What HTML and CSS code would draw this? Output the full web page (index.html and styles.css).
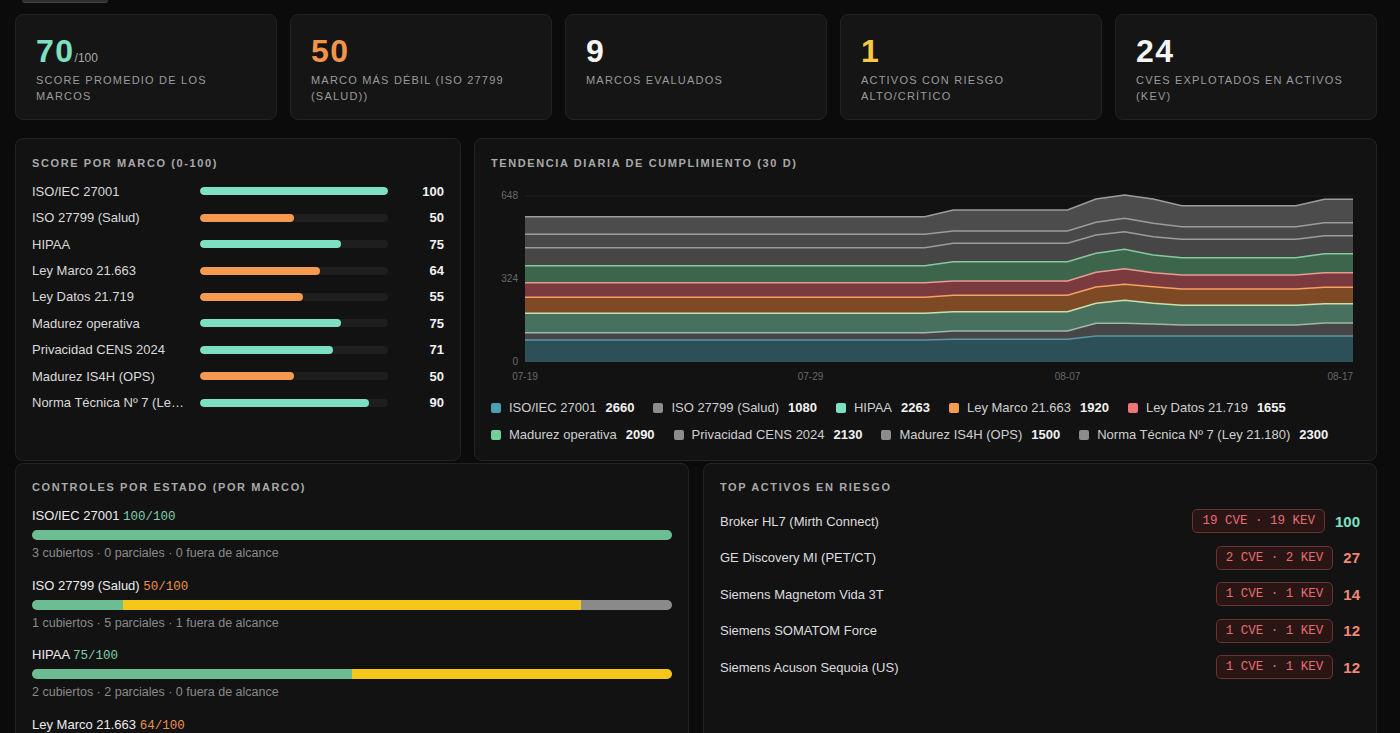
FILE: index.html
```html
<!DOCTYPE html>
<html lang="es">
<head>
    <meta charset="UTF-8">
    <meta name="viewport" content="width=device-width, initial-scale=1.0">
    <title>Cumplimiento</title>
    <link rel="stylesheet" href="styles.css">
</head>
<body>
<div class="page">
    <div class="toolbar"><span class="toolbar-btn"></span></div>

    <div class="stats">
        <div class="stat">
            <div class="stat-num mint">70<small>/100</small></div>
            <div class="stat-label">Score promedio de los marcos</div>
        </div>
        <div class="stat">
            <div class="stat-num orange">50</div>
            <div class="stat-label">Marco más débil (ISO 27799 (Salud))</div>
        </div>
        <div class="stat">
            <div class="stat-num">9</div>
            <div class="stat-label">Marcos evaluados</div>
        </div>
        <div class="stat">
            <div class="stat-num yellow">1</div>
            <div class="stat-label">Activos con riesgo alto/crítico</div>
        </div>
        <div class="stat">
            <div class="stat-num">24</div>
            <div class="stat-label">CVEs explotados en activos (KEV)</div>
        </div>
    </div>

    <div class="row-two">
        <section class="panel">
            <h2 class="panel-title">Score por marco (0-100)</h2>
            <div class="score-list">
                <div class="score-row"><span class="score-name">ISO/IEC 27001</span><span class="track"><span class="fill good" style="width:100%"></span></span><span class="score-val">100</span></div>
                <div class="score-row"><span class="score-name">ISO 27799 (Salud)</span><span class="track"><span class="fill warn" style="width:50%"></span></span><span class="score-val">50</span></div>
                <div class="score-row"><span class="score-name">HIPAA</span><span class="track"><span class="fill good" style="width:75%"></span></span><span class="score-val">75</span></div>
                <div class="score-row"><span class="score-name">Ley Marco 21.663</span><span class="track"><span class="fill warn" style="width:64%"></span></span><span class="score-val">64</span></div>
                <div class="score-row"><span class="score-name">Ley Datos 21.719</span><span class="track"><span class="fill warn" style="width:55%"></span></span><span class="score-val">55</span></div>
                <div class="score-row"><span class="score-name">Madurez operativa</span><span class="track"><span class="fill good" style="width:75%"></span></span><span class="score-val">75</span></div>
                <div class="score-row"><span class="score-name">Privacidad CENS 2024</span><span class="track"><span class="fill good" style="width:71%"></span></span><span class="score-val">71</span></div>
                <div class="score-row"><span class="score-name">Madurez IS4H (OPS)</span><span class="track"><span class="fill warn" style="width:50%"></span></span><span class="score-val">50</span></div>
                <div class="score-row"><span class="score-name">Norma Técnica Nº 7 (Ley 21.180)</span><span class="track"><span class="fill good" style="width:90%"></span></span><span class="score-val">90</span></div>
            </div>
        </section>

        <section class="panel">
            <h2 class="panel-title">Tendencia diaria de cumplimiento (30 d)</h2>
            <svg class="chart" width="869" height="198" viewBox="0 0 869 198">
                <line class="grid" x1="34" y1="10" x2="862" y2="10"/>
                <line class="grid" x1="34" y1="93" x2="862" y2="93"/>

                <!-- capas apiladas, de arriba hacia abajo -->
                <polygon fill="#4c4c4c" points="34,30.7 433.7,30.7 462.3,24 576.5,24 605,13 633.6,9 662.1,13 690.7,19.7 804.9,19.7 833.5,13.3 862,13.3 862,176 34,176"/>
                <polygon fill="#484848" points="34,48.3 433.7,48.3 462.3,45 576.5,45 605,36.3 633.6,32.3 662.1,37.3 690.7,40.7 804.9,40.7 833.5,36.7 862,36.7 862,176 34,176"/>
                <polygon fill="#464646" points="34,61.7 433.7,61.7 462.3,57.3 576.5,57.3 605,49 633.6,45.7 662.1,50.7 690.7,53.3 804.9,53.3 833.5,49.7 862,49.7 862,176 34,176"/>
                <polygon fill="#3d654b" points="34,79.7 433.7,79.7 462.3,75.7 576.5,75.7 605,67.3 633.6,63.3 662.1,69 690.7,71.7 804.9,71.7 833.5,67.7 862,67.7 862,176 34,176"/>
                <polygon fill="#7b3b3e" points="34,96.7 433.7,96.7 462.3,95 576.5,95 605,86.3 633.6,82.7 662.1,86.7 690.7,89 804.9,89 833.5,86.7 862,86.7 862,176 34,176"/>
                <polygon fill="#7d4a25" points="34,111.3 433.7,111.3 462.3,109.3 576.5,109.3 605,101 633.6,98.3 662.1,100.7 690.7,103 804.9,103 833.5,101.3 862,101.3 862,176 34,176"/>
                <polygon fill="#47705f" points="34,127.3 433.7,127.3 462.3,125.7 576.5,125.7 605,117.3 633.6,114.3 662.1,117.3 690.7,119.3 804.9,119.3 833.5,117.7 862,117.7 862,176 34,176"/>
                <polygon fill="#464646" points="34,146.7 433.7,146.7 462.3,145 576.5,145 605,137.3 633.6,137.3 662.1,138 690.7,139 804.9,139 833.5,137 862,137 862,176 34,176"/>
                <polygon fill="#2d5058" points="34,154 433.7,154 462.3,153.3 576.5,153.3 605,150 633.6,150 662.1,150 690.7,150 804.9,150 833.5,150 862,150 862,176 34,176"/>

                <polyline class="edge" stroke="#9c9c9c" points="34,30.7 433.7,30.7 462.3,24 576.5,24 605,13 633.6,9 662.1,13 690.7,19.7 804.9,19.7 833.5,13.3 862,13.3"/>
                <polyline class="edge" stroke="#9c9c9c" points="34,48.3 433.7,48.3 462.3,45 576.5,45 605,36.3 633.6,32.3 662.1,37.3 690.7,40.7 804.9,40.7 833.5,36.7 862,36.7"/>
                <polyline class="edge" stroke="#9c9c9c" points="34,61.7 433.7,61.7 462.3,57.3 576.5,57.3 605,49 633.6,45.7 662.1,50.7 690.7,53.3 804.9,53.3 833.5,49.7 862,49.7"/>
                <polyline class="edge" stroke="#86c9a0" points="34,79.7 433.7,79.7 462.3,75.7 576.5,75.7 605,67.3 633.6,63.3 662.1,69 690.7,71.7 804.9,71.7 833.5,67.7 862,67.7"/>
                <polyline class="edge" stroke="#e89a94" points="34,96.7 433.7,96.7 462.3,95 576.5,95 605,86.3 633.6,82.7 662.1,86.7 690.7,89 804.9,89 833.5,86.7 862,86.7"/>
                <polyline class="edge" stroke="#f7a060" points="34,111.3 433.7,111.3 462.3,109.3 576.5,109.3 605,101 633.6,98.3 662.1,100.7 690.7,103 804.9,103 833.5,101.3 862,101.3"/>
                <polyline class="edge" stroke="#c6e2b0" points="34,127.3 433.7,127.3 462.3,125.7 576.5,125.7 605,117.3 633.6,114.3 662.1,117.3 690.7,119.3 804.9,119.3 833.5,117.7 862,117.7"/>
                <polyline class="edge" stroke="#a3b5ae" points="34,146.7 433.7,146.7 462.3,145 576.5,145 605,137.3 633.6,137.3 662.1,138 690.7,139 804.9,139 833.5,137 862,137"/>
                <polyline class="edge" stroke="#5b97a6" points="34,154 433.7,154 462.3,153.3 576.5,153.3 605,150 633.6,150 662.1,150 690.7,150 804.9,150 833.5,150 862,150"/>

                <text class="axis" x="27" y="13" text-anchor="end">648</text>
                <text class="axis" x="27" y="96" text-anchor="end">324</text>
                <text class="axis" x="27" y="179" text-anchor="end">0</text>
                <text class="axis" x="34" y="194" text-anchor="middle">07-19</text>
                <text class="axis" x="319.5" y="194" text-anchor="middle">07-29</text>
                <text class="axis" x="576.5" y="194" text-anchor="middle">08-07</text>
                <text class="axis" x="862" y="194" text-anchor="end">08-17</text>
            </svg>
            <div class="legend">
                <span class="legend-item"><i class="sw" style="background:#4f9db3"></i>ISO/IEC 27001<b>2660</b></span>
                <span class="legend-item"><i class="sw" style="background:#8c8c8c"></i>ISO 27799 (Salud)<b>1080</b></span>
                <span class="legend-item"><i class="sw" style="background:#7ee0c3"></i>HIPAA<b>2263</b></span>
                <span class="legend-item"><i class="sw" style="background:#f59a4e"></i>Ley Marco 21.663<b>1920</b></span>
                <span class="legend-item"><i class="sw" style="background:#f07479"></i>Ley Datos 21.719<b>1655</b></span>
                <span class="legend-item"><i class="sw" style="background:#72cf98"></i>Madurez operativa<b>2090</b></span>
                <span class="legend-item"><i class="sw" style="background:#8c8c8c"></i>Privacidad CENS 2024<b>2130</b></span>
                <span class="legend-item"><i class="sw" style="background:#8c8c8c"></i>Madurez IS4H (OPS)<b>1500</b></span>
                <span class="legend-item"><i class="sw" style="background:#8c8c8c"></i>Norma Técnica Nº 7 (Ley 21.180)<b>2300</b></span>
            </div>
        </section>
    </div>

    <div class="row-three">
        <section class="panel">
            <h2 class="panel-title">Controles por estado (por marco)</h2>
            <div class="ctrl-list">
                <div class="ctrl">
                    <div class="ctrl-head">ISO/IEC 27001 <span class="mono ok">100/100</span></div>
                    <div class="stack"><span class="seg cov" style="width:100%"></span></div>
                    <div class="ctrl-sub">3 cubiertos · 0 parciales · 0 fuera de alcance</div>
                </div>
                <div class="ctrl">
                    <div class="ctrl-head">ISO 27799 (Salud) <span class="mono low">50/100</span></div>
                    <div class="stack"><span class="seg cov" style="width:14.29%"></span><span class="seg par" style="width:71.42%"></span><span class="seg out" style="width:14.29%"></span></div>
                    <div class="ctrl-sub">1 cubiertos · 5 parciales · 1 fuera de alcance</div>
                </div>
                <div class="ctrl">
                    <div class="ctrl-head">HIPAA <span class="mono ok">75/100</span></div>
                    <div class="stack"><span class="seg cov" style="width:50%"></span><span class="seg par" style="width:50%"></span></div>
                    <div class="ctrl-sub">2 cubiertos · 2 parciales · 0 fuera de alcance</div>
                </div>
                <div class="ctrl">
                    <div class="ctrl-head">Ley Marco 21.663 <span class="mono low">64/100</span></div>
                    <div class="stack"><span class="seg cov" style="width:40%"></span><span class="seg par" style="width:60%"></span></div>
                    <div class="ctrl-sub">2 cubiertos · 3 parciales · 0 fuera de alcance</div>
                </div>
            </div>
        </section>

        <section class="panel">
            <h2 class="panel-title">Top activos en riesgo</h2>
            <div class="risk-list">
                <div class="risk-row"><span class="risk-name">Broker HL7 (Mirth Connect)</span><span class="badge">19 CVE · 19 KEV</span><span class="risk-val ok">100</span></div>
                <div class="risk-row"><span class="risk-name">GE Discovery MI (PET/CT)</span><span class="badge">2 CVE · 2 KEV</span><span class="risk-val">27</span></div>
                <div class="risk-row"><span class="risk-name">Siemens Magnetom Vida 3T</span><span class="badge">1 CVE · 1 KEV</span><span class="risk-val">14</span></div>
                <div class="risk-row"><span class="risk-name">Siemens SOMATOM Force</span><span class="badge">1 CVE · 1 KEV</span><span class="risk-val">12</span></div>
                <div class="risk-row"><span class="risk-name">Siemens Acuson Sequoia (US)</span><span class="badge">1 CVE · 1 KEV</span><span class="risk-val">12</span></div>
            </div>
        </section>
    </div>
</div>
</body>
</html>
```

FILE: styles.css
```css
html {overflow: hidden;}
body {margin: 0; background: #0b0b0b; color: #dcdcdc; font-family: "Liberation Sans", Arial, sans-serif; font-size: 13px;}
.page {padding: 0 23px 0 15px;}

.toolbar {height: 2px; margin-bottom: 12px;}
.toolbar-btn {display: block; width: 86px; height: 2px; margin-left: 7px; background: #2f2f2f; border-bottom: 1px solid #444; border-radius: 0 0 4px 4px;}

/* tarjetas de resumen */
.stats {display: grid; grid-template-columns: repeat(5, 1fr); gap: 13px;}
.stat {background: #151515; border: 1px solid #222; border-radius: 8px; padding: 20px 20px 15px;}
.stat-num {font-size: 32px; font-weight: 700; line-height: 32px; color: #f4f4f4; letter-spacing: 1.5px;}
.stat-num small {font-size: 12px; font-weight: 400; line-height: 0; color: #a8a8a8; letter-spacing: 0;}
.stat-label {margin-top: 5px; font-size: 11px; line-height: 16px; letter-spacing: 1.2px; text-transform: uppercase; color: #9b9b9b;}
.mint {color: #7ee0c3;}
.orange {color: #f3944a;}
.yellow {color: #f7c844;}

/* paneles */
.row-two {display: grid; grid-template-columns: 446px 1fr; gap: 13px; margin-top: 18px;}
.row-three {display: grid; grid-template-columns: 1fr 1fr; gap: 14px; margin-top: 2px;}
.panel {background: #121212; border: 1px solid #222; border-radius: 8px; padding: 17px 16px 16px;}
.row-three .panel {padding-top: 16px; min-height: 400px;}
.panel-title {margin: 0; font-size: 11px; line-height: 14px; font-weight: 700; letter-spacing: 1.6px; text-transform: uppercase; color: #a9a9a9;}

/* score por marco */
.score-list {margin-top: 8px;}
.score-row {display: grid; grid-template-columns: 157px 1fr 45px; column-gap: 11px; align-items: center; height: 26.45px;}
.score-name {white-space: nowrap; overflow: hidden; text-overflow: ellipsis; color: #d9d9d9;}
.track {display: block; height: 8px; background: #1e1e1e; border-radius: 4px; overflow: hidden;}
.fill {display: block; height: 100%; border-radius: 4px;}
.fill.good {background: #7ee0c3;}
.fill.warn {background: #f59a4e;}
.score-val {text-align: right; font-weight: 700; color: #f2f2f2;}

/* tendencia */
.chart {display: block; margin-top: 16px;}
.chart .grid {stroke: #1f1f1f; stroke-width: 1;}
.chart .edge {fill: none; stroke-width: 1.6;}
.chart .axis {font-family: "Liberation Sans", Arial, sans-serif; font-size: 10px; fill: #686868;}
.legend {display: flex; flex-wrap: wrap; column-gap: 19px; row-gap: 9px; margin-top: 15px;}
.legend-item {display: inline-flex; align-items: center; line-height: 18px; color: #cfcfcf; white-space: nowrap;}
.legend-item b {margin-left: 9px; color: #f2f2f2;}
.sw {display: inline-block; width: 10px; height: 10px; border-radius: 2px; margin-right: 8px;}

/* controles por estado */
.ctrl-list {margin-top: 13px; display: flex; flex-direction: column; gap: 14.5px;}
.ctrl-head {line-height: 18px; color: #ececec;}
.mono {font-family: "Liberation Mono", "DejaVu Sans Mono", monospace; font-size: 12.5px;}
.ok {color: #7fcfa8;}
.low {color: #ea9150;}
.stack {display: flex; height: 10px; margin-top: 4px; border-radius: 5px; overflow: hidden; background: #2a2a2a;}
.seg {display: block; height: 100%;}
.seg.cov {background: #6dbd92;}
.seg.par {background: #f6c71b;}
.seg.out {background: #8a8a8a;}
.ctrl-sub {margin-top: 4px; line-height: 18px; font-size: 12.5px; color: #8a8a8a;}

/* top activos */
.risk-list {margin-top: 15px; display: flex; flex-direction: column; gap: 12.6px;}
.risk-row {display: flex; align-items: center; gap: 10px; height: 24px;}
.risk-name {flex: 1; color: #dedede;}
.badge {height: 24px; box-sizing: border-box; padding: 0 9px; line-height: 22px; border: 1px solid #6b3232; border-radius: 5px; background: #2a1515; color: #e46e6e; font-family: "Liberation Mono", "DejaVu Sans Mono", monospace; font-size: 12.5px;}
.risk-val {font-size: 15px; font-weight: 700; color: #f08878;}
.risk-val.ok {color: #7ee0c3;}
```
